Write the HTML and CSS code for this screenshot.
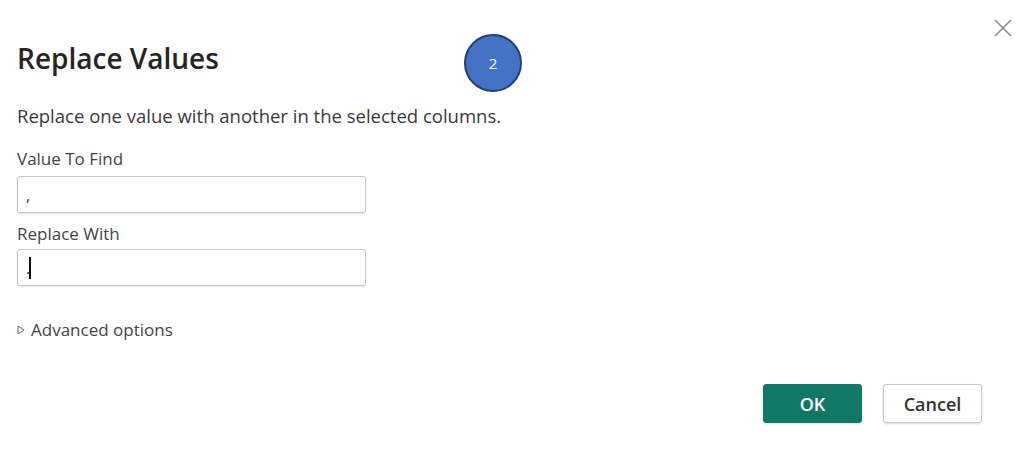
FILE: index.html
```html
<!DOCTYPE html>
<html lang="en">
<head>
  <meta charset="UTF-8" />
  <title>Replace Values</title>
  <link rel="stylesheet" href="styles.css">
</head>
<body>
  <div class="dialog">
    <button class="close" aria-label="Close">
      <svg width="18" height="18" viewBox="0 0 18 18"><path d="M1 1L17 17M17 1L1 17" stroke="#8a8a8a" stroke-width="1.6" fill="none"/></svg>
    </button>
    <div class="step">2</div>

    <h1>Replace Values</h1>
    <p class="desc">Replace one value with another in the selected columns.</p>

    <label class="field-label first">Value To Find</label>
    <div class="input"><span class="val">,</span></div>

    <label class="field-label">Replace With</label>
    <div class="input second"><span class="val">.</span><span class="caret"></span></div>

    <div class="advanced">
      <svg width="8" height="10" viewBox="0 0 8 10"><path d="M1 1L7 5L1 9Z" fill="none" stroke="#666" stroke-width="1"/></svg>
      <span>Advanced options</span>
    </div>

    <div class="actions">
      <button class="btn primary">OK</button>
      <button class="btn">Cancel</button>
    </div>
  </div>
</body>
</html>
```

FILE: styles.css
```css
* { box-sizing: border-box; margin: 0; padding: 0; }
body {
  font-family: 'Open Sans', 'Noto Sans', sans-serif;
  background: #fff;
  color: #333;
  width: 1024px;
  height: 454px;
  overflow: hidden;
}
.dialog {
  position: relative;
  padding: 38px 17px 0 17px;
  height: 454px;
}
.close {
  position: absolute;
  top: 19px;
  right: 12px;
  background: none;
  border: none;
  cursor: pointer;
}
.step {
  position: absolute;
  left: 464px;
  top: 34px;
  width: 58px;
  height: 58px;
  border-radius: 50%;
  background: #4472c4;
  border: 2px solid #253f6e;
  color: #fff;
  font-size: 15px;
  display: flex;
  align-items: center;
  justify-content: center;
}
h1 {
  font-size: 28px;
  font-weight: 600;
  color: #252525;
  line-height: 40px;
}
.desc {
  margin-top: 26px;
  font-size: 18.5px;
  color: #3a3a3a;
  line-height: 24px;
}
.field-label {
  display: block;
  margin-top: 9px;
  font-size: 17px;
  color: #444;
  line-height: 24px;
}
.field-label.first { margin-top: 19px; }
.input {
  margin-top: 5px;
  width: 349px;
  height: 37px;
  border: 1px solid #c4c4c4;
  border-radius: 3px;
  box-shadow: 0 1px 2px rgba(0, 0, 0, 0.12);
  display: flex;
  align-items: center;
  padding-left: 8px;
  font-size: 16px;
  color: #333;
}
.input.second { margin-top: 3px; }
.caret {
  display: inline-block;
  width: 2px;
  height: 22px;
  background: #111;
  margin-left: -1px;
}
.advanced {
  margin-top: 32px;
  display: flex;
  align-items: center;
  gap: 6px;
  font-size: 17px;
  line-height: 24px;
  color: #444;
}
.actions {
  position: absolute;
  right: 42px;
  bottom: 31px;
  display: flex;
  gap: 21px;
}
.btn {
  width: 99px;
  height: 39px;
  border: 1px solid #c8c8c8;
  border-radius: 3px;
  background: #fff;
  font-family: inherit;
  font-size: 18px;
  font-weight: 600;
  color: #333;
  box-shadow: 0 1px 2px rgba(0, 0, 0, 0.15);
  cursor: pointer;
}
.btn.primary {
  background: #117865;
  border-color: #117865;
  color: #fff;
}
```
